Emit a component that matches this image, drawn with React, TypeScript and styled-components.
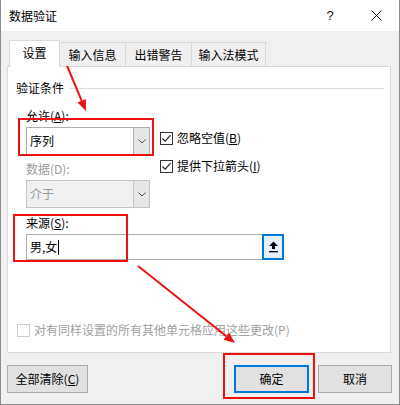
import React from "react";
import styled, { createGlobalStyle } from "styled-components";

const GlobalStyle = createGlobalStyle`
  html, body {
    margin: 0;
    padding: 0;
    background: #ffffff;
  }
  body {
    font-family: "Noto Sans CJK SC", "Liberation Sans", sans-serif;
    font-size: 12px;
    color: #000;
  }
  * {
    box-sizing: border-box;
  }
`;

const Window = styled.div`
  position: relative;
  width: 400px;
  height: 405px;
  background: #f0f0f0;
  border: 1px solid #8c8c8c;
  border-top: none;
  display: flex;
  flex-direction: column;
  line-height: 16px;
`;

const TitleBar = styled.div`
  height: 31px;
  background: #ffffff;
  display: flex;
  align-items: center;
  padding-left: 8px;
`;

const Title = styled.div`
  flex: 1;
  font-size: 12px;
`;

const CaptionButton = styled.div`
  width: 46px;
  height: 31px;
  display: flex;
  align-items: center;
  justify-content: center;
  font-family: "Liberation Sans", sans-serif;
  font-size: 13px;
  color: #111;
`;

const Body = styled.div`
  padding: 9px 8px 0 6px;
`;

const TabStrip = styled.div`
  display: flex;
  align-items: flex-end;
  height: 26px;
  padding-left: 2px;
`;

const Tab = styled.div<{ $active?: boolean; $width: number }>`
  position: relative;
  z-index: ${({ $active }) => ($active ? 2 : 1)};
  width: ${({ $width }) => $width}px;
  height: ${({ $active }) => ($active ? 27 : 24)}px;
  margin-bottom: ${({ $active }) => ($active ? -1 : 0)}px;
  margin-left: ${({ $active }) => ($active ? 0 : -1)}px;
  background: ${({ $active }) => ($active ? "#ffffff" : "#f0f0f0")};
  border: 1px solid #d9d9d9;
  border-bottom: none;
  display: flex;
  align-items: center;
  justify-content: center;
  padding-bottom: ${({ $active }) => ($active ? 2 : 0)}px;
  &:first-child {
    margin-left: 0;
  }
`;

const Panel = styled.div`
  height: 287px;
  background: #ffffff;
  border: 1px solid #d9d9d9;
  display: flex;
  flex-direction: column;
`;

const Legend = styled.div`
  display: flex;
  align-items: center;
  gap: 6px;
  margin: 13px 6px 0 8px;
`;

const LegendLine = styled.div`
  flex: 1;
  height: 1px;
  background: #dcdcdc;
`;

const Criteria = styled.div`
  padding-left: 18px;
  margin-top: 12px;
`;

const TopGrid = styled.div`
  display: grid;
  grid-template-columns: 124px auto;
  column-gap: 10px;
`;

const Column = styled.div`
  display: flex;
  flex-direction: column;
`;

const Label = styled.div<{ $disabled?: boolean; $gap?: number }>`
  height: 16px;
  margin-top: ${({ $gap }) => $gap ?? 0}px;
  margin-bottom: 3px;
  color: ${({ $disabled }) => ($disabled ? "#9a9a9a" : "#000")};
`;

const Combo = styled.div<{ $disabled?: boolean }>`
  height: 28px;
  display: flex;
  background: ${({ $disabled }) => ($disabled ? "#f0f0f0" : "#ffffff")};
  border: 1px solid ${({ $disabled }) => ($disabled ? "#c4c4c4" : "#adadad")};
  color: ${({ $disabled }) => ($disabled ? "#9a9a9a" : "#000")};
`;

const ComboText = styled.div`
  flex: 1;
  display: flex;
  align-items: center;
  padding-left: 3px;
`;

const ComboButton = styled.div<{ $disabled?: boolean }>`
  width: 16px;
  display: flex;
  align-items: center;
  justify-content: center;
  background: ${({ $disabled }) => ($disabled ? "#e6e6e6" : "#e5e5e5")};
  border-left: 1px solid ${({ $disabled }) => ($disabled ? "#c4c4c4" : "#adadad")};
`;

const CheckColumn = styled.div`
  display: flex;
  flex-direction: column;
  gap: 8px;
  padding-top: 20px;
`;

const CheckRow = styled.div<{ $disabled?: boolean }>`
  height: 20px;
  display: flex;
  align-items: center;
  gap: 4px;
  color: ${({ $disabled }) => ($disabled ? "#a0a0a0" : "#000")};
  white-space: nowrap;
`;

const Box = styled.div<{ $disabled?: boolean }>`
  width: 13px;
  height: 13px;
  border: 1px solid ${({ $disabled }) => ($disabled ? "#cccccc" : "#333333")};
  background: #ffffff;
  display: flex;
  align-items: center;
  justify-content: center;
`;

const SourceInput = styled.div`
  width: 258px;
  height: 26px;
  display: flex;
  border: 1px solid #adadad;
  background: #ffffff;
`;

const SourceText = styled.div`
  flex: 1;
  display: flex;
  align-items: center;
  padding-left: 3px;
`;

const Caret = styled.span`
  display: inline-block;
  width: 1px;
  height: 15px;
  background: #000;
  margin-left: 1px;
`;

const PickButton = styled.div`
  width: 22px;
  margin: -1px -1px -1px 0;
  border: 2px solid #0078d7;
  background: #e5f1fb;
  display: flex;
  align-items: center;
  justify-content: center;
`;

const ApplyRow = styled(CheckRow)`
  margin: auto 0 14px 9px;
  height: 16px;
`;

const Footer = styled.div`
  display: flex;
  padding: 12px 7px 0 6px;
  gap: 9px;
`;

const Button = styled.div<{ $width: number; $default?: boolean }>`
  width: ${({ $width }) => $width}px;
  height: 28px;
  display: flex;
  align-items: center;
  justify-content: center;
  background: #e1e1e1;
  border: ${({ $default }) => ($default ? "2px solid #0078d7" : "1px solid #adadad")};
`;

const Spacer = styled.div`
  flex: 1;
`;

const Overlay = styled.svg`
  position: absolute;
  left: -1px;
  top: 0;
  pointer-events: none;
`;

const Chevron = () => (
  <svg width="8" height="5" viewBox="0 0 8 5">
    <path d="M0.5 0.5 L4 4 L7.5 0.5" fill="none" stroke="#555" strokeWidth="1" />
  </svg>
);

const Check = () => (
  <svg width="11" height="11" viewBox="0 0 11 11">
    <path d="M1.5 5.5 L4.2 8.2 L9.5 2.2" fill="none" stroke="#222" strokeWidth="1.2" />
  </svg>
);

const Arrow = ({ x1, y1, x2, y2 }: { x1: number; y1: number; x2: number; y2: number }) => {
  const a = Math.atan2(y2 - y1, x2 - x1);
  const len = 11;
  const w = 4.5;
  const bx = x2 - len * Math.cos(a);
  const by = y2 - len * Math.sin(a);
  const p1 = `${bx + w * Math.sin(a)},${by - w * Math.cos(a)}`;
  const p2 = `${bx - w * Math.sin(a)},${by + w * Math.cos(a)}`;
  return (
    <g>
      <line x1={x1} y1={y1} x2={bx} y2={by} stroke="#ee1111" strokeWidth="2" />
      <polygon points={`${x2},${y2} ${p1} ${p2}`} fill="#ee1111" />
    </g>
  );
};

const tabs = [
  { label: "设置", width: 51 },
  { label: "输入信息", width: 67 },
  { label: "出错警告", width: 67 },
  { label: "输入法模式", width: 75 },
];

const App = () => {
  return (
    <>
      <GlobalStyle />
      <Window>
        <TitleBar>
          <Title>数据验证</Title>
          <CaptionButton>?</CaptionButton>
          <CaptionButton>
            <svg width="11" height="11" viewBox="0 0 11 11">
              <path d="M0.5 0.5 L10.5 10.5 M10.5 0.5 L0.5 10.5" stroke="#111" strokeWidth="1" />
            </svg>
          </CaptionButton>
        </TitleBar>

        <Body>
          <TabStrip>
            {tabs.map((t, i) => (
              <Tab key={t.label} $active={i === 0} $width={t.width}>
                {t.label}
              </Tab>
            ))}
          </TabStrip>

          <Panel>
            <Legend>
              验证条件
              <LegendLine />
            </Legend>

            <Criteria>
              <TopGrid>
                <Column>
                  <Label>
                    允许(<u>A</u>):
                  </Label>
                  <Combo>
                    <ComboText>序列</ComboText>
                    <ComboButton>
                      <Chevron />
                    </ComboButton>
                  </Combo>
                  <Label $disabled $gap={6}>
                    数据(D):
                  </Label>
                  <Combo $disabled>
                    <ComboText>介于</ComboText>
                    <ComboButton $disabled>
                      <Chevron />
                    </ComboButton>
                  </Combo>
                </Column>
                <CheckColumn>
                  <CheckRow>
                    <Box>
                      <Check />
                    </Box>
                    <span>
                      忽略空值(<u>B</u>)
                    </span>
                  </CheckRow>
                  <CheckRow>
                    <Box>
                      <Check />
                    </Box>
                    <span>
                      提供下拉箭头(<u>I</u>)
                    </span>
                  </CheckRow>
                </CheckColumn>
              </TopGrid>

              <Label $gap={7}>
                来源(<u>S</u>):
              </Label>
              <SourceInput>
                <SourceText>
                  男,女
                  <Caret />
                </SourceText>
                <PickButton>
                  <svg width="11" height="12" viewBox="0 0 11 12">
                    <path d="M5.5 0.5 L10 5 L7 5 L7 8 L4 8 L4 5 L1 5 Z" fill="#000" />
                    <rect x="1" y="10" width="9" height="1.3" fill="#000" />
                  </svg>
                </PickButton>
              </SourceInput>
            </Criteria>

            <ApplyRow $disabled>
              <Box $disabled />
              <span>对有同样设置的所有其他单元格应用这些更改(P)</span>
            </ApplyRow>
          </Panel>
        </Body>

        <Footer>
          <Button $width={81}>
            <span>
              全部清除(<u>C</u>)
            </span>
          </Button>
          <Spacer />
          <Button $width={75} $default>
            确定
          </Button>
          <Button $width={74}>取消</Button>
        </Footer>

        <Overlay width="400" height="405" viewBox="0 0 400 405">
          <g fill="none" stroke="#ee1111" strokeWidth="2">
            <rect x="10" y="41" width="49" height="24" />
            <rect x="19" y="119" width="134" height="36" />
            <rect x="14" y="215" width="113" height="46" />
            <rect x="224" y="354" width="90" height="44" />
          </g>
          <Arrow x1={65} y1={61} x2={86} y2={111} />
          <Arrow x1={138} y1={266} x2={235} y2={343} />
        </Overlay>
      </Window>
    </>
  );
};

export default App;
